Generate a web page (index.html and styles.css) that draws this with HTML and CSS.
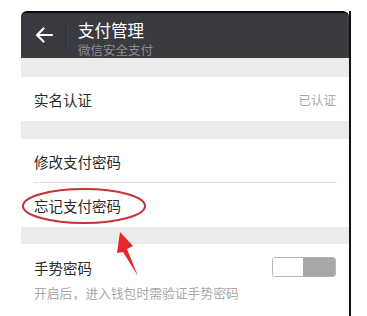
FILE: index.html
```html
<!DOCTYPE html>
<html>
<head>
<meta charset="utf-8">
<link rel="stylesheet" href="styles.css">
</head>
<body>
<div class="phone">
  <header class="bar">
    <svg class="back" width="18" height="16" viewBox="0 0 18 16"><path d="M17 8H2M8.5 1.5L2 8l6.5 6.5" fill="none" stroke="#fff" stroke-width="2.2" stroke-linecap="round" stroke-linejoin="round"/></svg>
    <span class="divider"></span>
    <div class="titles">
      <div class="title">支付管理</div>
      <div class="subtitle">微信安全支付</div>
    </div>
  </header>
  <div class="band band-top"></div>
  <div class="row">
    <span class="label">实名认证</span>
    <span class="value">已认证</span>
  </div>
  <div class="band"></div>
  <div class="row row-sep">
    <span class="label">修改支付密码</span>
  </div>
  <div class="row">
    <span class="label">忘记支付密码</span>
  </div>
  <div class="band band-bottom"></div>
  <div class="gesture">
    <div class="gesture-head">
      <span class="label">手势密码</span>
      <span class="toggle"><span class="toggle-off"></span><span class="toggle-on"></span></span>
    </div>
    <div class="hint">开启后，进入钱包时需验证手势密码</div>
  </div>
</div>
<svg class="annot" width="367" height="316" viewBox="0 0 367 316">
  <ellipse cx="84" cy="206" rx="61" ry="17" fill="none" stroke="#c8323a" stroke-width="2"/>
  <polygon points="120,232 133,246 127,249 138,276 123,252 117,253" fill="#e8262b"/>
</svg>
</body>
</html>
```
FILE: styles.css
```css
html, body {
  margin: 0;
  padding: 0;
  background: #fff;
}
body {
  width: 367px;
  height: 316px;
  position: relative;
  overflow: hidden;
  font-family: "Noto Sans CJK SC", "Noto Sans", sans-serif;
}
.phone {
  margin-left: 21px;
  margin-top: 11px;
  width: 328px;
  border-right: 2px solid #111;
  background: #fff;
}
.bar {
  height: 45px;
  border-top: 2px solid #0a0a0a;
  border-radius: 6px 6px 0 0;
  background: #3a3b40;
  display: flex;
  align-items: center;
}
.back {
  margin-left: 14px;
  margin-top: -2px;
}
.divider {
  width: 1px;
  height: 30px;
  background: #2e2f33;
  margin-left: 12px;
}
.titles {
  margin-left: 12px;
  margin-top: 6px;
  display: flex;
  flex-direction: column;
  gap: 1px;
}
.title {
  color: #fff;
  font-size: 16.5px;
  line-height: 22px;
  height: 22px;
}
.subtitle {
  color: #8d8e92;
  font-size: 12.5px;
  line-height: 16px;
  height: 16px;
}
.band {
  height: 18px;
  background: #ebebeb;
}
.band-top {
  height: 19px;
}
.band-bottom {
  height: 17px;
}
.row {
  height: 44px;
  display: flex;
  align-items: center;
  justify-content: space-between;
  padding: 0 13px 0 13px;
  position: relative;
}
.row-sep::after {
  content: "";
  position: absolute;
  left: 13px;
  right: 12px;
  bottom: 0;
  height: 1px;
  background: #e4e4e4;
}
.label {
  font-size: 14.5px;
  color: #2a2a2a;
}
.value {
  font-size: 12.5px;
  color: #aaa;
}
.gesture {
  padding: 13px 13px 14px 13px;
}
.gesture-head {
  display: flex;
  align-items: center;
  justify-content: space-between;
  height: 20px;
}
.toggle {
  display: flex;
  width: 64px;
  height: 20px;
  border-radius: 3px;
  overflow: hidden;
  box-sizing: border-box;
  border: 1px solid #b5b5b5;
}
.toggle-off {
  flex: 1;
  background: #fff;
}
.toggle-on {
  width: 32px;
  background: #a8a8a8;
}
.hint {
  margin-top: 7px;
  font-size: 12.8px;
  color: #a9a9a9;
  line-height: 18px;
}
.annot {
  position: absolute;
  left: 0;
  top: 0;
  pointer-events: none;
}
```
